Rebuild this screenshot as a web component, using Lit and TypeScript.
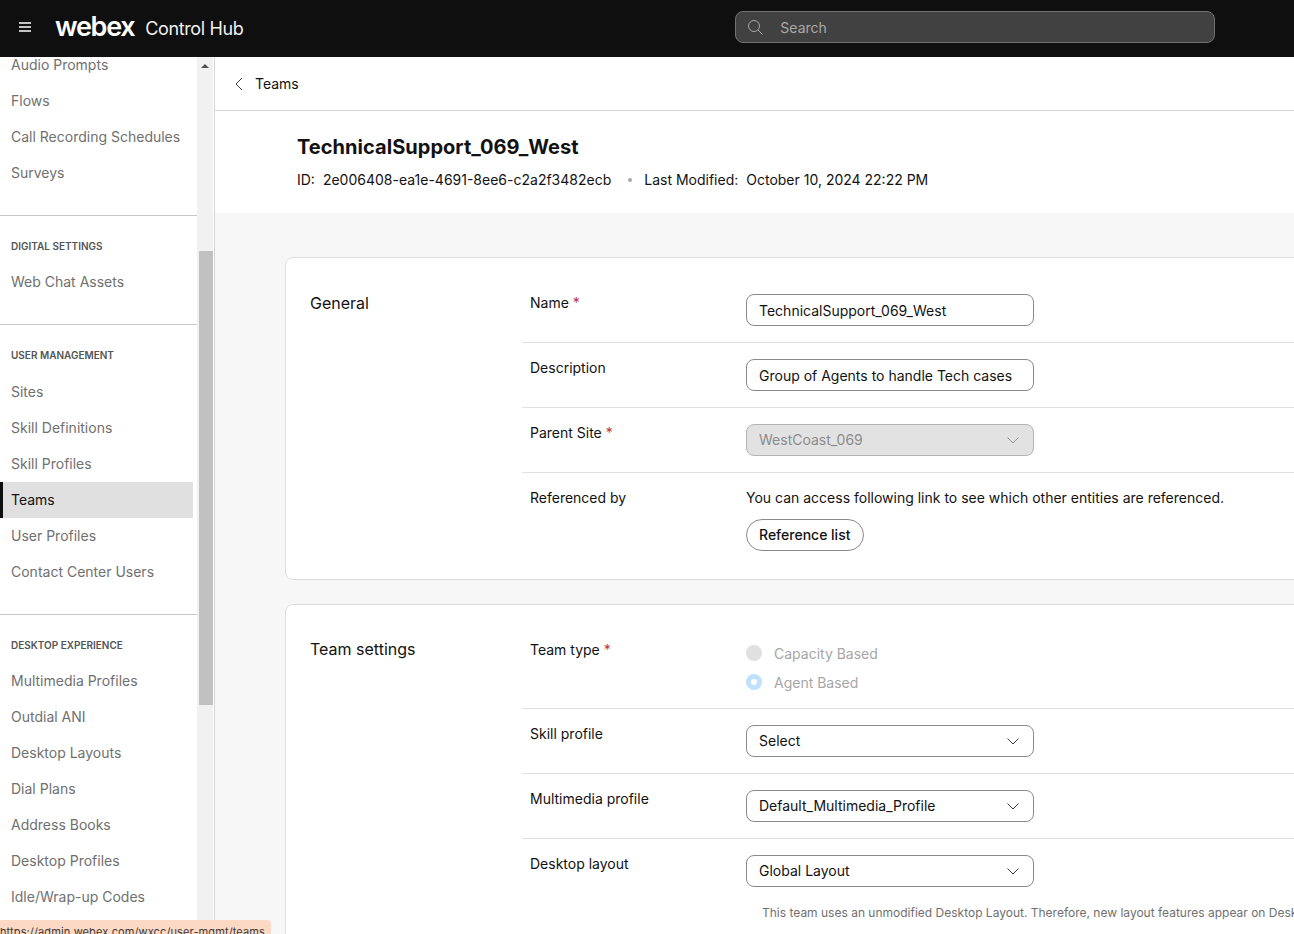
import { LitElement, html, css } from 'lit';
import { customElement } from 'lit/decorators.js';

const chevron = html`<svg class="chev" viewBox="0 0 12 7" width="12" height="7"><path d="M.5.5L6 6 11.5.5" fill="none" stroke="currentColor" stroke-width="1"/></svg>`;

const navGroups = [
  { items: ['Audio Prompts', 'Flows', 'Call Recording Schedules', 'Surveys'] },
  { title: 'Digital settings', items: ['Web Chat Assets'] },
  { title: 'User management', items: ['Sites', 'Skill Definitions', 'Skill Profiles', 'Teams', 'User Profiles', 'Contact Center Users'] },
  { title: 'Desktop experience', items: ['Multimedia Profiles', 'Outdial ANI', 'Desktop Layouts', 'Dial Plans', 'Address Books', 'Desktop Profiles', 'Idle/Wrap-up Codes'] },
];

@customElement('app-root')
export class AppRoot extends LitElement {
  static styles = css`
    :host {
      display: flex;
      flex-direction: column;
      position: relative;
      height: 934px;
      overflow: hidden;
      font-family: Inter, 'Liberation Sans', sans-serif;
      font-size: 14px;
      color: #121212;
      background: #fff;
    }
    .topbar {
      flex: none;
      height: 57px;
      box-sizing: border-box;
      padding-bottom: 3px;
      background: #0f0f0f;
      display: flex;
      align-items: center;
      color: #fff;
      position: relative;
    }
    .burger {
      margin-left: 19px;
      width: 12px;
      display: flex;
      flex-direction: column;
      gap: 2px;
    }
    .burger i {
      display: block;
      height: 2px;
      background: #c4c4c4;
    }
    .logo {
      margin-left: 24px;
      font-size: 27px;
      font-weight: 600;
      letter-spacing: -1.3px;
      line-height: 1;
      position: relative;
      top: -1px;
    }
    .product {
      margin-left: 11px;
      margin-top: 3px;
      font-size: 18px;
      font-weight: 400;
      letter-spacing: -0.38px;
      color: #f0f0f0;
    }
    .search {
      margin-left: 492px;
      width: 478px;
      height: 30px;
      border: 1px solid #707070;
      border-radius: 8px;
      background: #414141;
      display: flex;
      align-items: center;
      color: #a8a8a8;
    }
    .search svg {
      margin-left: 12px;
    }
    .search span {
      margin-left: 17px;
    }
    .body {
      flex: 1;
      min-height: 0;
      display: flex;
    }
    .sidebar {
      flex: none;
      width: 214px;
      display: flex;
      border-right: 1px solid #d6d6d6;
      overflow: hidden;
    }
    .nav {
      width: 197px;
      flex: none;
      margin-top: -10px;
    }
    .group {
      padding-bottom: 24px;
      border-bottom: 1px solid #c8c8c8;
    }
    .group:last-child {
      border-bottom: none;
    }
    .group-title {
      height: 48.4px;
      box-sizing: border-box;
      padding: 23px 0 0 11px;
      font-size: 10px;
      line-height: 14px;
      font-weight: 600;
      text-transform: uppercase;
      color: #545454;
    }
    .item {
      height: 36px;
      width: 193px;
      box-sizing: border-box;
      padding: 0 0 1.4px 11px;
      display: flex;
      align-items: center;
      color: #707070;
      white-space: nowrap;
    }
    .item.active {
      background: #e0e0e0;
      color: #121212;
      padding-left: 8px;
      border-left: 3px solid #0f0f0f;
    }
    .scrollbar {
      flex: none;
      width: 16px;
      background: #f1f1f1;
      display: flex;
      flex-direction: column;
      align-items: center;
    }
    .arrow {
      margin-top: 7px;
      width: 0;
      height: 0;
      border-left: 4px solid transparent;
      border-right: 4px solid transparent;
      border-bottom: 4px solid #505050;
    }
    .thumb {
      margin-top: 183px;
      width: 14px;
      margin-left: 1px;
      height: 454px;
      background: #c1c1c1;
    }
    .main {
      flex: 1;
      min-width: 0;
      overflow: hidden;
      background: #f7f7f7;
    }
    .crumb {
      height: 54px;
      box-sizing: border-box;
      background: #fff;
      border-bottom: 1px solid #d4d4d4;
      display: flex;
      align-items: center;
      padding-left: 20px;
      gap: 12px;
    }
    .head {
      background: #fff;
      height: 102px;
      box-sizing: border-box;
      padding: 23px 0 0 82px;
    }
    h1 {
      margin: 0;
      font-size: 20px;
      line-height: 26px;
      font-weight: 700;
      letter-spacing: 0.04px;
    }
    .meta {
      margin-top: 10px;
      line-height: 20px;
      display: flex;
      align-items: center;
      white-space: nowrap;
    }
    .meta .dot {
      width: 4px;
      height: 4px;
      border-radius: 50%;
      margin: 0 12px 0 17px;
      background: #a8a8a8;
    }
    .meta b {
      font-weight: 400;
      margin-right: 8px;
    }
    .content {
      padding: 44px 0 0 70px;
      display: flex;
      flex-direction: column;
      gap: 24px;
      width: 1200px;
    }
    .card {
      background: #fff;
      border: 1px solid #dedede;
      border-radius: 8px;
      display: flex;
      padding: 20px 0 12px;
    }
    .card h2 {
      flex: none;
      width: 212px;
      margin: 0 0 0 24px;
      padding-top: 15px;
      font-size: 16px;
      line-height: 20px;
      font-weight: 400;
    }
    .card + .card h2 {
      padding-top: 14px;
    }
    .rows {
      flex: 1;
    }
    .row {
      display: flex;
      padding: 16px 0 16px 8px;
      border-bottom: 1px solid #e0e0e0;
    }
    .row.last {
      border-bottom: none;
    }
    .label {
      flex: none;
      width: 216px;
      line-height: 20px;
      margin-top: -1px;
    }
    .req {
      color: #c0304c;
    }
    .field {
      width: 288px;
      height: 32px;
      box-sizing: border-box;
      border: 1px solid #8a8a8a;
      border-radius: 8px;
      padding: 0 14px 0 12px;
      display: flex;
      align-items: center;
      justify-content: space-between;
      white-space: nowrap;
    }
    .field.disabled {
      background: #e2e2e2;
      border-color: #b4b4b4;
      color: #8c8c8c;
    }
    .card + .card .field span,
    .field.disabled span {
      margin-top: -2px;
    }
    .chev {
      flex: none;
      color: #3c3c3c;
    }
    .disabled .chev {
      color: #9a9a9a;
    }
    .ref-text {
      line-height: 20px;
      white-space: nowrap;
      margin-top: -1px;
    }
    .pill {
      margin-top: 11px;
      width: fit-content;
      height: 32px;
      box-sizing: border-box;
      padding: 0 13px 2px 12px;
      border: 1px solid #8a8a8a;
      border-radius: 16px;
      display: flex;
      align-items: center;
      font-weight: 500;
    }
    .radios {
      padding-top: 2px;
    }
    .radio {
      display: flex;
      align-items: center;
      gap: 12px;
      height: 20px;
      color: #a6a6a6;
    }
    .radio + .radio {
      margin-top: 9px;
    }
    .radio i {
      width: 16px;
      height: 16px;
      box-sizing: border-box;
      border-radius: 50%;
      background: #e0e0e0;
    }
    .radio i.on {
      background: #fff;
      border: 5px solid #bfe0ff;
    }
    .note {
      margin: 1px 0 0 240px;
      padding-bottom: 24px;
      font-size: 12px;
      line-height: 18px;
      color: #707070;
      white-space: nowrap;
    }
    .status {
      position: absolute;
      left: 0;
      bottom: 0;
      height: 14px;
      width: 271px;
      box-sizing: border-box;
      padding-top: 5px;
      background: #fcd9c4;
      border-radius: 0 4px 0 0;
      font-size: 11px;
      letter-spacing: 0.12px;
      line-height: 14px;
      color: #3a3a3a;
      white-space: nowrap;
      overflow: hidden;
    }
  `;

  private field(value: string, disabled = false, select = true) {
    return html`<div class="field ${disabled ? 'disabled' : ''}"><span>${value}</span>${select ? chevron : ''}</div>`;
  }

  private row(label: string, required: boolean, control: unknown, last = false) {
    return html`<div class="row ${last ? 'last' : ''}">
      <div class="label">${label}${required ? html` <span class="req">*</span>` : ''}</div>
      <div>${control}</div>
    </div>`;
  }

  render() {
    return html`
      <div class="topbar">
        <div class="burger"><i></i><i></i><i></i></div>
        <div class="logo">webex</div>
        <div class="product">Control Hub</div>
        <div class="search">
          <svg width="15" height="15" viewBox="0 0 15 15"><circle cx="6" cy="6" r="5.5" fill="none" stroke="#a8a8a8" stroke-width="1"/><path d="M10 10l4.5 4.5" stroke="#a8a8a8" stroke-width="1"/></svg>
          <span>Search</span>
        </div>
      </div>
      <div class="body">
        <div class="sidebar">
          <div class="nav">
            ${navGroups.map((g) => html`<div class="group">
              ${g.title ? html`<div class="group-title">${g.title}</div>` : ''}
              ${g.items.map((item) => html`<div class="item ${item === 'Teams' ? 'active' : ''}">${item}</div>`)}
            </div>`)}
          </div>
          <div class="scrollbar">
            <div class="arrow"></div>
            <div class="thumb"></div>
          </div>
        </div>
        <div class="main">
          <div class="crumb">
            <svg width="8" height="14" viewBox="0 0 8 14"><path d="M7 1L1 7l6 6" fill="none" stroke="#3c3c3c" stroke-width="1"/></svg>
            <span>Teams</span>
          </div>
          <div class="head">
            <h1>TechnicalSupport_069_West</h1>
            <div class="meta">
              <b>ID:</b><span>2e006408-ea1e-4691-8ee6-c2a2f3482ecb</span>
              <span class="dot"></span>
              <b>Last Modified:</b><span>October 10, 2024 22:22 PM</span>
            </div>
          </div>
          <div class="content">
            <section class="card">
              <h2>General</h2>
              <div class="rows">
                ${this.row('Name', true, this.field('TechnicalSupport_069_West', false, false))}
                ${this.row('Description', false, this.field('Group of Agents to handle Tech cases', false, false))}
                ${this.row('Parent Site', true, this.field('WestCoast_069', true))}
                ${this.row('Referenced by', false, html`
                  <div class="ref-text">You can access following link to see which other entities are referenced.</div>
                  <div class="pill">Reference list</div>
                `, true)}
              </div>
            </section>
            <section class="card">
              <h2>Team settings</h2>
              <div class="rows">
                ${this.row('Team type', true, html`
                  <div class="radios">
                    <div class="radio"><i></i>Capacity Based</div>
                    <div class="radio"><i class="on"></i>Agent Based</div>
                  </div>
                `)}
                ${this.row('Skill profile', false, this.field('Select'))}
                ${this.row('Multimedia profile', false, this.field('Default_Multimedia_Profile'))}
                ${this.row('Desktop layout', false, this.field('Global Layout'), true)}
                <div class="note">This team uses an unmodified Desktop Layout. Therefore, new layout features appear on Desktop automatically.</div>
              </div>
            </section>
          </div>
        </div>
      </div>
      <div class="status">https://admin.webex.com/wxcc/user-mgmt/teams</div>
    `;
  }
}
